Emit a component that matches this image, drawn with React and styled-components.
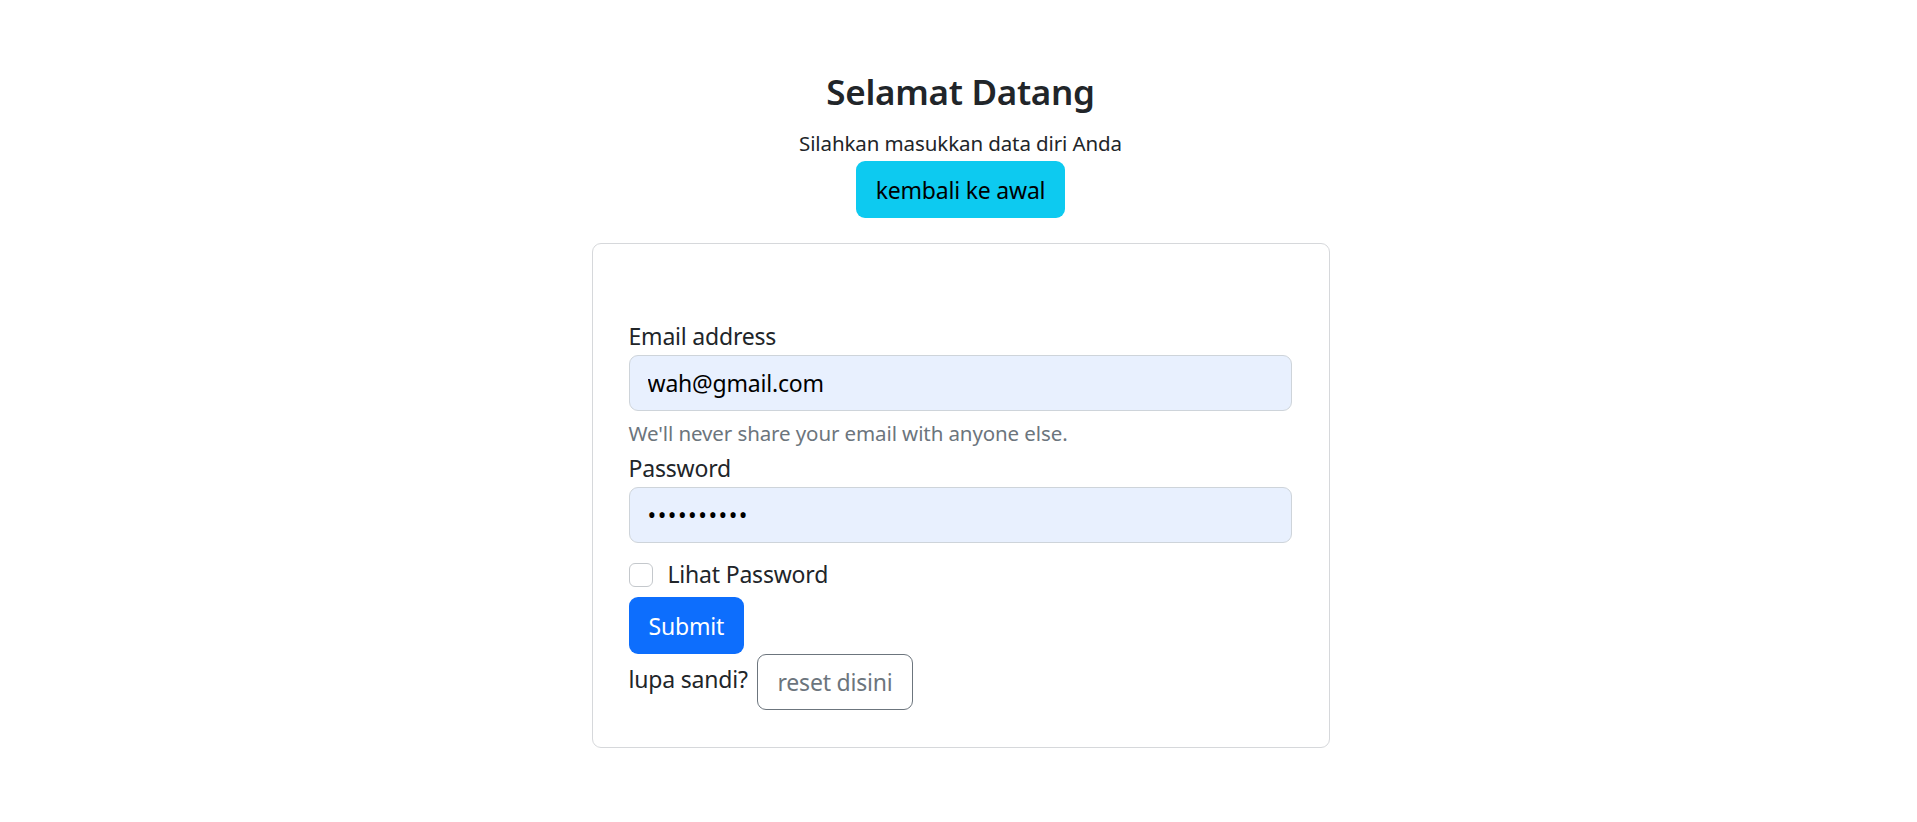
import React, { useState } from 'react'
import styled, { createGlobalStyle } from 'styled-components'

const GlobalStyle = createGlobalStyle`
  *, *::before, *::after { box-sizing: border-box; }
  body {
    margin: 0;
    background: #fff;
    color: #212529;
    font-family: "Noto Sans", "Liberation Sans", sans-serif;
    font-size: 23px;
    letter-spacing: -0.2px;
    line-height: 36px;
  }
`

const Page = styled.div`
  padding: 70px 0 40px 4px;
  text-align: center;
`
const Title = styled.h4`
  margin: 0;
  font-size: 35px;
  letter-spacing: -0.3px;
  line-height: 43px;
  font-weight: 600;
`
const Subtitle = styled.p`
  margin: 15px 0 0;
  font-size: 20.5px;
  letter-spacing: -0.1px;
  line-height: 31px;
`
const BackButton = styled.button`
  display: inline-block;
  margin-top: 2px;
  height: 57px;
  padding: 0 20px;
  border: none;
  border-radius: 9px;
  background: #0dcaf0;
  color: #000;
  font-family: inherit;
  font-size: 23px;
  letter-spacing: -0.2px;
  line-height: 36px;
  cursor: pointer;
`
const Card = styled.div`
  width: 738px;
  margin: 25px auto 0;
  padding: 74px 37px 37px 36px;
  border: 1px solid #d6d8db;
  border-radius: 9px;
  text-align: left;
`
const Label = styled.label`
  display: block;
  margin-bottom: 1px;
`
const Input = styled.input`
  display: block;
  width: 100%;
  height: 56px;
  padding: 0 18px;
  border: 1px solid #ced4da;
  border-radius: 9px;
  background: #e8f0fe;
  color: #000;
  font-family: inherit;
  font-size: 23px;
  letter-spacing: ${p => (p.$secret ? '1.5px' : '-0.2px')};
  outline: none;
`
const HelpText = styled.div`
  margin: 6px 0 1px;
  font-size: 20.5px;
  letter-spacing: -0.1px;
  line-height: 32px;
  color: #6c757d;
`
const CheckRow = styled.div`
  display: flex;
  align-items: flex-start;
  gap: 15px;
  margin-top: 13px;
`
const Checkbox = styled.input`
  appearance: none;
  flex: none;
  width: 24px;
  height: 24px;
  margin: 7px 0 0;
  border: 1px solid #c4c8cc;
  border-radius: 6px;
  background: #fff;
  &:checked { background: #0d6efd; border-color: #0d6efd; }
`
const SubmitButton = styled.button`
  display: block;
  margin-top: 5px;
  height: 57px;
  padding: 0 20px;
  border: none;
  border-radius: 9px;
  background: #0d6efd;
  color: #fff;
  font-family: inherit;
  font-size: 23px;
  letter-spacing: -0.2px;
  cursor: pointer;
`
const ForgotRow = styled.div``
const ResetButton = styled.button`
  display: inline-block;
  vertical-align: middle;
  margin-left: 4px;
  height: 56px;
  padding: 0 19px;
  border: 1px solid #6c757d;
  border-radius: 9px;
  background: transparent;
  color: #6c757d;
  font-family: inherit;
  font-size: 23px;
  letter-spacing: -0.2px;
  cursor: pointer;
`

export default function App() {
  const [show, setShow] = useState(false)
  return (
    <Page>
      <GlobalStyle />
      <Title>Selamat Datang</Title>
      <Subtitle>Silahkan masukkan data diri Anda</Subtitle>
      <BackButton>kembali ke awal</BackButton>
      <Card>
        <form onSubmit={e => e.preventDefault()}>
          <Label htmlFor="email">Email address</Label>
          <Input id="email" type="email" defaultValue="wah@gmail.com" />
          <HelpText>We'll never share your email with anyone else.</HelpText>
          <Label htmlFor="pass">Password</Label>
          <Input id="pass" type={show ? 'text' : 'password'} $secret={!show} defaultValue="wahyu12345" />
          <CheckRow>
            <Checkbox type="checkbox" id="show" checked={show} onChange={e => setShow(e.target.checked)} />
            <label htmlFor="show">Lihat Password</label>
          </CheckRow>
          <SubmitButton type="submit">Submit</SubmitButton>
          <ForgotRow>
            lupa sandi? <ResetButton type="button">reset disini</ResetButton>
          </ForgotRow>
        </form>
      </Card>
    </Page>
  )
}
